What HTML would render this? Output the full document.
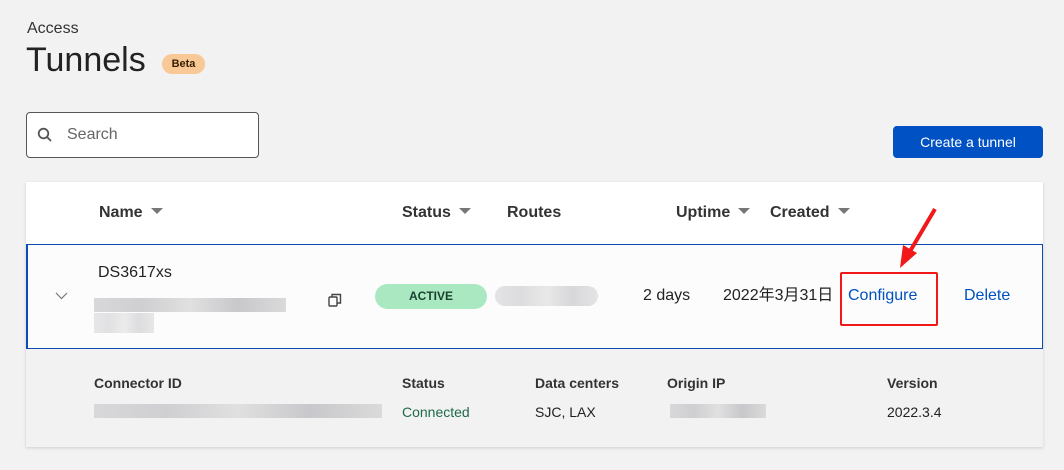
<!DOCTYPE html>
<html><head><meta charset="utf-8"><style>
*{margin:0;padding:0;box-sizing:border-box}
body{width:1064px;height:470px;background:#f2f2f2;font-family:"Liberation Sans","Noto Sans CJK SC",sans-serif;color:#222;position:relative;overflow:hidden}
.a{position:absolute;white-space:nowrap;line-height:20px}
.h{font-weight:bold;font-size:16px;color:#333}
.tri{display:inline-block;width:0;height:0;border-left:6px solid transparent;border-right:6px solid transparent;border-top:6px solid #777;margin-left:8px;vertical-align:3px}
.blur{position:absolute;background:linear-gradient(90deg,#d8d8da,#cfcfd2,#e0e0e0,#c8c8cc,#dadada);}
.lbl{font-weight:bold;font-size:14px;color:#333}
.val{font-size:14px;color:#222}
</style></head><body>
<div class="a" style="left:27px;top:19px;font-size:16px;color:#333">Access</div>
<div class="a" style="left:26px;top:50px;font-size:34px;color:#222;line-height:20px">Tunnels</div>
<div class="a" style="left:162px;top:54px;width:43px;height:20px;border-radius:10px;background:#f8c896;font-size:11px;font-weight:bold;color:#3a1e00;text-align:center;line-height:20px">Beta</div>
<div class="a" style="left:26px;top:112px;width:233px;height:46px;border:1px solid #555;border-radius:4px;background:#fff"></div>
<svg class="a" style="left:37px;top:127px" width="16" height="16" viewBox="0 0 16 16"><circle cx="6.5" cy="6.5" r="4.8" fill="none" stroke="#555" stroke-width="1.8"/><path d="M10 10l4 4" stroke="#555" stroke-width="1.8"/></svg>
<div class="a" style="left:67px;top:125px;font-size:16px;color:#666">Search</div>
<div class="a" style="left:893px;top:126px;width:150px;height:32px;background:#0051c3;border-radius:4px;color:#fff;font-size:14px;text-align:center;line-height:32px">Create a tunnel</div>
<div class="a" style="left:26px;top:182px;width:1017px;height:265px;background:#fff;box-shadow:0 1px 3px rgba(0,0,0,.15)"></div>
<div class="a" style="left:26px;top:348px;width:1017px;height:99px;background:#f2f2f2"></div>
<div class="a h" style="left:99px;top:203px">Name<span class="tri"></span></div>
<div class="a h" style="left:402px;top:203px">Status<span class="tri"></span></div>
<div class="a h" style="left:507px;top:203px">Routes</div>
<div class="a h" style="left:676px;top:203px">Uptime<span class="tri"></span></div>
<div class="a h" style="left:770px;top:203px">Created<span class="tri"></span></div>
<div class="a" style="left:26px;top:244px;width:1017px;height:105px;border:1px solid #0a4cb0;border-left-width:2px;background:#fcfcfc"></div>
<svg class="a" style="left:55px;top:292px" width="13" height="8"><path d="M1 1l5.5 5.5L12 1" fill="none" stroke="#777" stroke-width="1.2"/></svg>
<div class="a" style="left:98px;top:263px;font-size:16px">DS3617xs</div>
<div class="blur" style="left:94px;top:298px;width:192px;height:14px"></div>
<div class="blur" style="left:94px;top:313px;width:60px;height:20px;opacity:.6"></div>
<svg class="a" style="left:328px;top:293px" width="14" height="14" viewBox="0 0 14 14"><rect x="1" y="4" width="8" height="9" rx="1" fill="none" stroke="#444" stroke-width="1.4"/><path d="M4 4V1.5h8.5V10H9" fill="none" stroke="#444" stroke-width="1.4"/></svg>
<div class="a" style="left:375px;top:284px;width:112px;height:25px;border-radius:13px;background:#a9e8c1;font-size:12px;font-weight:bold;color:#1d4030;text-align:center;line-height:25px">ACTIVE</div>
<div class="blur" style="left:495px;top:286px;width:103px;height:20px;border-radius:10px;opacity:.7"></div>
<div class="a" style="left:643px;top:286px;font-size:16px">2 days</div>
<div class="a" style="left:723px;top:286px;font-size:16px">2022年3月31日</div>
<div class="a" style="left:848px;top:286px;font-size:16px;color:#0051c3">Configure</div>
<div class="a" style="left:964px;top:286px;font-size:16px;color:#0051c3">Delete</div>
<div class="a" style="left:840px;top:272px;width:98px;height:54px;border:2px solid #f01818;border-radius:2px"></div>
<svg class="a" style="left:895px;top:205px" width="45" height="65"><path d="M40 4L14 48" stroke="#f01818" stroke-width="4"/><path d="M5 63L8 40 22 48Z" fill="#f01818"/></svg>
<div class="a lbl" style="left:94px;top:373px">Connector ID</div>
<div class="a lbl" style="left:402px;top:373px">Status</div>
<div class="a lbl" style="left:535px;top:373px">Data centers</div>
<div class="a lbl" style="left:667px;top:373px">Origin IP</div>
<div class="a lbl" style="left:887px;top:373px">Version</div>
<div class="blur" style="left:94px;top:404px;width:288px;height:14px"></div>
<div class="a val" style="left:402px;top:402px;color:#1f6a4a">Connected</div>
<div class="a val" style="left:535px;top:402px">SJC, LAX</div>
<div class="blur" style="left:670px;top:404px;width:96px;height:14px"></div>
<div class="a val" style="left:887px;top:402px">2022.3.4</div>
</body></html>
